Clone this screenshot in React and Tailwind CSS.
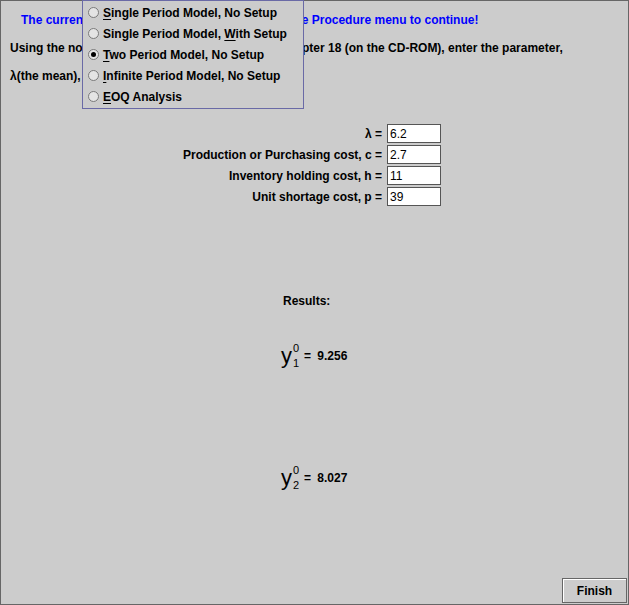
import React from "react";

const font = { fontFamily: '"Liberation Sans", Arial, sans-serif' };

function Radio({ checked }) {
  return (
    <span className="flex h-[11px] w-[11px] items-center justify-center rounded-full border border-[#7a7a7a] bg-[#e4e4e4]">
      {checked && <span className="h-[5px] w-[5px] rounded-full bg-black" />}
    </span>
  );
}

function MenuItem({ checked, pre, key1, post }) {
  return (
    <div className="flex h-[21px] items-center gap-[4px] pl-[5px]">
      <Radio checked={checked} />
      <span>
        {pre}
        <span className="underline decoration-1 underline-offset-2">{key1}</span>
        {post}
      </span>
    </div>
  );
}

function Field({ label, value }) {
  return (
    <div className="flex h-[21px] items-center justify-end gap-[5px]">
      <span>{label}</span>
      <div className="flex h-[19px] w-[54px] items-center border border-[#555] bg-white pl-[2px] font-normal">
        {value}
      </div>
    </div>
  );
}

function Result({ sub, value }) {
  return (
    <div className="flex items-center pl-[280px]">
      <span className="relative inline-block h-[26px] w-[23px] font-normal">
        <span className="absolute left-0 top-[2px] text-[22px] leading-[22px]">y</span>
        <span className="absolute left-[12px] top-0 text-[11px] leading-[11px]">0</span>
        <span className="absolute left-[12px] top-[15px] text-[11px] leading-[11px]">{sub}</span>
      </span>
      <span className="whitespace-pre">= </span>
      <span className="ml-[3px]">{value}</span>
    </div>
  );
}

export default function App() {
  return (
    <div
      style={font}
      className="relative flex h-[605px] w-[629px] flex-col border border-[#666] bg-[#cccccc] text-[12px] font-bold leading-[16px] text-black"
    >
      <div className="pl-[20px] pt-[11px] text-[#0000ff]">
        The current procedure is complete. Please use the Procedure menu to continue!
      </div>
      <div className="pl-[9px] pt-[12px]">
        Using the notation explained in Section 18.6 of Chapter 18 (on the CD-ROM), enter the parameter,
      </div>
      <div className="pl-[9px] pt-[12px]">λ(the mean), and the costs.</div>

      <div className="mt-[39px] flex flex-col pr-[187px]">
        <Field label="λ =" value="6.2" />
        <Field label="Production or Purchasing cost, c =" value="2.7" />
        <Field label="Inventory holding cost, h =" value="11" />
        <Field label="Unit shortage cost, p =" value="39" />
      </div>

      <div className="mt-[86px] pl-[282px]">Results:</div>
      <div className="mt-[34px]">
        <Result sub="1" value="9.256" />
      </div>
      <div className="mt-[96px]">
        <Result sub="2" value="8.027" />
      </div>

      <div className="mt-auto flex justify-end pb-[1px] pr-[1px]">
        <button className="h-[25px] w-[65px] border border-[#666] bg-[#cccccc] shadow-[inset_1px_1px_0_#ffffff]">
          Finish
        </button>
      </div>

      <div className="absolute left-[81px] top-[-1px] h-[109px] w-[222px] border border-[#6a6aa6] bg-[#cccccc] pt-[1px]">
        <MenuItem pre="" key1="S" post="ingle Period Model, No Setup" />
        <MenuItem pre="Single Period Model, " key1="W" post="ith Setup" />
        <MenuItem checked pre="" key1="T" post="wo Period Model, No Setup" />
        <MenuItem pre="" key1="I" post="nfinite Period Model, No Setup" />
        <MenuItem pre="" key1="E" post="OQ Analysis" />
      </div>
    </div>
  );
}
